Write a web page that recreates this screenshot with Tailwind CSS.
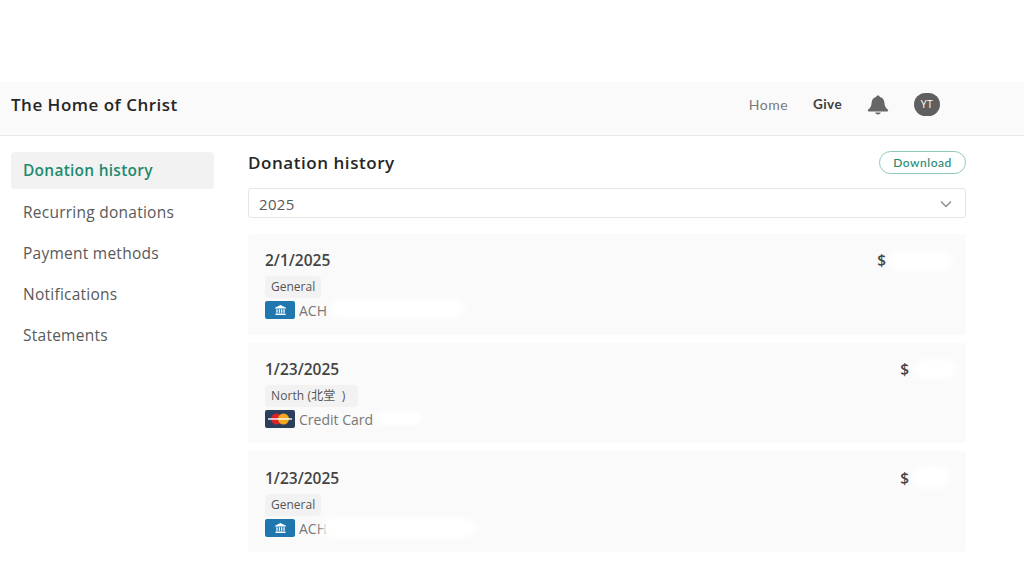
<!doctype html>
<html>
<head>
<meta charset="utf-8">
<script src="https://cdn.jsdelivr.net/npm/@tailwindcss/browser@4"></script>
</head>
<body class="bg-white font-['Open_Sans','Noto_Sans_CJK_SC',sans-serif] text-[#555]">
<div class="w-[1024px] h-[576px] overflow-hidden flex flex-col">
  <div class="h-[82px] shrink-0"></div>
  <header class="h-[54px] shrink-0 bg-[#fafafa] border-b border-[#e9e9e9] flex items-center pl-[11px] pb-[8px]">
    <div class="text-[17px] font-semibold text-[#262626] tracking-[0.5px]">The Home of Christ</div>
    <nav class="ml-auto flex items-center mr-[84px]">
      <span class="text-[14px] font-['Lato'] text-[#7a7a7a] tracking-[0.5px]">Home</span>
      <span class="ml-[25px] text-[13.5px] font-['Lato'] font-bold text-[#3c3c3c] tracking-[0.4px]">Give</span>
      <svg class="ml-[25px]" width="22" height="20" viewBox="0 0 22 20"><path fill="#666" d="M11 0.500c1.100 0 1.800.6 1.900 1.500 2.900.7 4.300 3 4.500 5.800.2 3.400 1.200 5 3.500 7 .6.6.3 1.700-.7 1.700H1.800c-1 0-1.300-1.100-.7-1.700 2.300-2 3.300-3.600 3.500-7 .2-2.800 1.600-5.100 4.500-5.800.1-.9.8-1.500 1.900-1.500zM8.200 17.500h5.600c-.2 1.200-1.400 2-2.800 2s-2.600-.8-2.800-2z"/></svg>
      <div class="ml-[25px] w-[26px] h-[23px] rounded-full bg-[#5f5f5f] text-white text-[10.5px] font-medium flex items-center justify-center tracking-[0.3px]">YT</div>
    </nav>
  </header>
  <div class="flex flex-1 min-h-0">
    <aside class="w-[248px] shrink-0 pl-[11px] pr-[34px] pt-[16px] text-[15.5px] text-[#595959] tracking-[0.25px]">
      <div class="h-[37px] flex items-center px-[12px] rounded bg-[#f2f2f2] text-[#1f8a70] font-semibold mb-[3px]">Donation history</div>
      <div class="h-[41px] flex items-center px-[12px]">Recurring donations</div>
      <div class="h-[41px] flex items-center px-[12px]">Payment methods</div>
      <div class="h-[41px] flex items-center px-[12px]">Notifications</div>
      <div class="h-[41px] flex items-center px-[12px]">Statements</div>
    </aside>
    <main class="w-[718px] shrink-0 pt-[14px]">
      <div class="h-[25px] flex items-center justify-between">
        <h1 class="text-[17px] font-semibold text-[#262626] tracking-[0.55px]">Donation history</h1>
        <button class="w-[87px] h-[23px] rounded-full border border-[#8fc9b8] bg-white text-[12px] font-['Lato'] font-medium text-[#1f8a70] tracking-[0.5px]">Download</button>
      </div>
      <div class="mt-[13px] h-[30px] rounded-[3px] border border-[#e5e5e5] flex items-center justify-between pl-[10px] pr-[13px] pt-[2px] text-[15px] text-[#595959] tracking-[0.3px]">
        2025
        <svg width="12" height="8" viewBox="0 0 12 8" fill="none" stroke="#8a8a8a" stroke-width="1.300"><path d="M1 1.500l5 5 5-5"/></svg>
      </div>
      <div class="mt-[16px] flex flex-col gap-[8px]">

        <article class="relative h-[101px] rounded-[3px] bg-[#fafafa] pl-[17px] pr-[15px] pt-[15px]">
          <div class="flex justify-between text-[15.5px] font-semibold text-[#444] tracking-[0px] leading-[22px]"><span>2/1/2025</span><span class="mr-[65px]">$</span></div>
          <span class="mt-[5px] inline-block h-[22px] leading-[22px] px-[6px] rounded bg-[#f2f2f2] text-[12px] text-[#555]">General</span>
          <div class="flex items-center h-[18px] mt-[3px] text-[14px] text-[#777]">
            <span class="w-[30px] h-[18px] rounded-[2px] bg-[#1f77ad] flex items-center justify-center mr-[4px]"><svg width="11" height="10" viewBox="0 0 11 10" fill="#fff"><path d="M5.500 0L11 2.700V3.600H0V2.700zM1.300 4.300h1.300v3.500H1.300zM3.800 4.300h1.300v3.500H3.800zM6 4.300h1.300v3.500H6zM8.400 4.300h1.300v3.500H8.400zM.5 8.400h10V10H.5z"/></svg></span>ACH
          </div>
          <div class="absolute left-[82px] top-[66px] w-[134px] h-[18px] bg-white rounded-full blur-[3px]"></div>
          <div class="absolute left-[641px] top-[17px] w-[64px] h-[20px] bg-white rounded-full blur-[3px]"></div>
        </article>

        <article class="relative h-[100px] rounded-[3px] bg-[#fafafa] pl-[17px] pr-[15px] pt-[15px]">
          <div class="flex justify-between text-[15.5px] font-semibold text-[#444] tracking-[0px] leading-[22px]"><span>1/23/2025</span><span class="mr-[42px]">$</span></div>
          <span class="mt-[5px] inline-block h-[22px] leading-[22px] px-[6px] rounded bg-[#f2f2f2] text-[12px] text-[#555] tracking-[0.1px] whitespace-pre">North (北堂  )  </span>
          <div class="flex items-center h-[18px] mt-[3px] text-[14px] text-[#777]">
            <span class="w-[30px] h-[18px] rounded-[2px] bg-[#2b3f5c] flex items-center justify-center mr-[4px] relative">
              <svg width="28" height="12" viewBox="0 0 28 12"><circle cx="10.500" cy="6" r="5.500" fill="#d9222a"/><circle cx="17.500" cy="6" r="5.500" fill="#f0a81c"/><rect x="2" y="5" width="24" height="2" fill="#fff" opacity=".7"/></svg>
            </span>Credit Card
          </div>
          <div class="absolute left-[128px] top-[68px] w-[46px] h-[14px] bg-white rounded-full blur-[2px]"></div>
          <div class="absolute left-[666px] top-[16px] w-[42px] h-[20px] bg-white rounded-full blur-[3px]"></div>
        </article>

        <article class="relative h-[101px] rounded-[3px] bg-[#fafafa] pl-[17px] pr-[15px] pt-[16px]">
          <div class="flex justify-between text-[15.5px] font-semibold text-[#444] tracking-[0px] leading-[22px]"><span>1/23/2025</span><span class="mr-[42px]">$</span></div>
          <span class="mt-[5px] inline-block h-[22px] leading-[22px] px-[6px] rounded bg-[#f2f2f2] text-[12px] text-[#555]">General</span>
          <div class="flex items-center h-[18px] mt-[3px] text-[14px] text-[#777]">
            <span class="w-[30px] h-[18px] rounded-[2px] bg-[#1f77ad] flex items-center justify-center mr-[4px]"><svg width="11" height="10" viewBox="0 0 11 10" fill="#fff"><path d="M5.500 0L11 2.700V3.600H0V2.700zM1.300 4.300h1.300v3.500H1.300zM3.800 4.300h1.300v3.500H3.800zM6 4.300h1.300v3.500H6zM8.400 4.300h1.300v3.500H8.400zM.5 8.400h10V10H.5z"/></svg></span>ACH
          </div>
          <div class="absolute left-[74px] top-[67px] w-[154px] h-[20px] bg-white rounded-full blur-[3px]"></div>
          <div class="absolute left-[664px] top-[15px] w-[38px] h-[22px] bg-white rounded-full blur-[3px]"></div>
        </article>

      </div>
    </main>
  </div>
</div>
</body>
</html>
